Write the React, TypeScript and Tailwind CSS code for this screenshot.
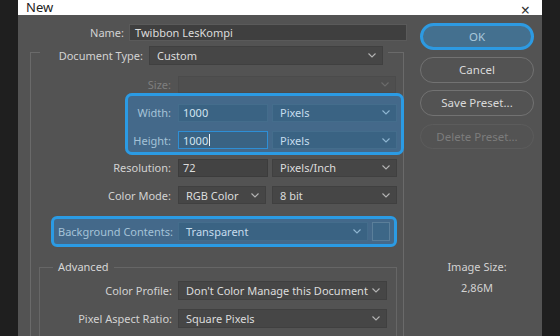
const Chevron = ({ color = "#b4b4b4" }: { color?: string }) => (
  <svg width="8" height="5" viewBox="0 0 8 5" className="shrink-0">
    <polyline points="0.5,0.5 4,4 7.5,0.5" fill="none" stroke={color} strokeWidth="1.1" />
  </svg>
);

interface SelectProps {
  value?: string;
  w: string;
  h?: string;
  tone?: "normal" | "blue" | "disabled";
}

const Select = ({ value = "", w, h = "h-[18px]", tone = "normal" }: SelectProps) => {
  const box =
    tone === "blue"
      ? "bg-[#3a6383] border-[#446d8c] text-[#c6dced]"
      : tone === "disabled"
      ? "bg-[#4f4f4f] border-[#4b4b4b] text-[#888]"
      : "bg-[#464646] border-[#404040] text-[#dcdcdc]";
  return (
    <div className={`${w} ${h} ${box} border flex items-center justify-between pl-[7px] pr-[6px] shrink-0`}>
      <span className="whitespace-nowrap leading-none">{value}</span>
      <Chevron color={tone === "blue" ? "#8fb6d2" : tone === "disabled" ? "#6c6c6c" : "#b4b4b4"} />
    </div>
  );
};

const Input = ({ value, w, blue = false, focused = false }: { value: string; w: string; blue?: boolean; focused?: boolean }) => (
  <div
    className={`${w} h-[18px] border flex items-center px-[4px] shrink-0 ${
      blue ? "bg-[#3a6383] text-[#d2e4f1]" : "bg-[#434343] text-[#dcdcdc]"
    } ${focused ? "border-[#2e8fd6]" : blue ? "border-[#446d8c]" : "border-[#3c3c3c]"}`}
  >
    <span className="leading-none">{value}</span>
    {focused && <span className="w-px h-[12px] bg-[#e8f2fa] ml-[1px]" />}
  </div>
);

const Label = ({ text, w, dim = false, blue = false }: { text: string; w: string; dim?: boolean; blue?: boolean }) => (
  <div
    className={`${w} text-right shrink-0 whitespace-nowrap leading-none ${
      dim ? "text-[#7f7f7f]" : blue ? "text-[#a5c3d8]" : "text-[#d2d2d2]"
    }`}
  >
    {text}
  </div>
);

const Button = ({ text, kind = "normal", className = "" }: { text: string; kind?: "ok" | "normal" | "disabled"; className?: string }) => {
  const style =
    kind === "ok"
      ? "border-[3px] border-[#2d9ae2] bg-[#44708f] text-[#a9c7dc]"
      : kind === "disabled"
      ? "border border-[#5c5c5c] text-[#7c7c7c]"
      : "border border-[#727272] text-[#dadada]";
  return (
    <div className={`w-[114px] shrink-0 rounded-full flex items-center justify-center leading-none text-[11.5px] ${style} ${className}`}>
      {text}
    </div>
  );
};

export default function App() {
  return (
    <div
      className="w-[560px] h-[336px] flex bg-[#1f1f1f] overflow-hidden text-[11px]"
      style={{ fontFamily: '"Noto Sans", "Open Sans", sans-serif' }}
    >
      <div className="w-[18px] shrink-0" />
      <div className="w-[524px] h-[336px] shrink-0 flex flex-col bg-[#535353] overflow-hidden">
        {/* title bar */}
        <div className="h-[15px] shrink-0 bg-white flex justify-between items-end overflow-hidden">
          <span className="ml-[8px] mb-[1px] text-[13px] leading-[13px] text-[#222]">New</span>
          <span className="mr-[12px] -mb-[2px] text-[16px] leading-[13px] text-[#333]">×</span>
        </div>

        <div className="flex flex-1 min-h-0">
          {/* form */}
          <div className="w-[392px] shrink-0 pt-[9px]">
            <div className="flex items-center gap-[5px] h-[17px]">
              <Label text="Name:" w="w-[106px]" />
              <div className="w-[278px] h-[17px] bg-[#3f3f3f] border border-[#5a5a5a] flex items-center px-[5px] text-[#dcdcdc]">
                <span className="leading-none">Twibbon LesKompi</span>
              </div>
            </div>

            <div className="mt-[11px] ml-[12px] w-[374px] h-[290px] border-l border-t border-r border-[#6a6a6a]">
              <div className="-mt-[7px] ml-[9px] w-[348px] bg-[#535353] flex items-center gap-[6px] h-[19px]">
                <Label text="Document Type:" w="w-[103px]" />
                <Select value="Custom" w="w-[234px]" h="h-[19px]" />
              </div>

              <div className="mt-[11px] flex items-center gap-[7px] h-[17px]">
                <Label text="Size:" w="w-[140px]" dim />
                <Select w="w-[218px]" h="h-[17px]" tone="disabled" />
              </div>

              <div className="relative ml-[94px] w-[279px] h-[62px] pt-[11px] rounded-[7px] bg-[#44698a]">
                <div className="flex items-center gap-[7px] h-[17px]">
                  <Label text="Width:" w="w-[46px]" blue />
                  <div className="flex gap-[4px]">
                    <Input value="1000" w="w-[90px]" blue />
                    <Select value="Pixels" w="w-[125px]" tone="blue" />
                  </div>
                </div>
                <div className="mt-[10px] flex items-center gap-[7px] h-[18px]">
                  <Label text="Height:" w="w-[46px]" blue />
                  <div className="flex gap-[4px]">
                    <Input value="1000" w="w-[90px]" blue focused />
                    <Select value="Pixels" w="w-[125px]" tone="blue" />
                  </div>
                </div>
                <div className="absolute inset-0 rounded-[7px] border-[3px] border-[#2b9be4] pointer-events-none" />
              </div>

              <div className="mt-[4px] flex items-center gap-[7px] h-[17px]">
                <Label text="Resolution:" w="w-[140px]" />
                <div className="flex gap-[4px]">
                  <Input value="72" w="w-[90px]" />
                  <Select value="Pixels/Inch" w="w-[125px]" />
                </div>
              </div>

              <div className="mt-[10px] flex items-center gap-[7px] h-[18px]">
                <Label text="Color Mode:" w="w-[140px]" />
                <div className="flex gap-[6px]">
                  <Select value="RGB Color" w="w-[88px]" />
                  <Select value="8 bit" w="w-[125px]" />
                </div>
              </div>

              <div className="mt-[12px] ml-[20px] w-[346px] h-[31px] rounded-[6px] border-[3px] border-[#2b9be4] bg-[#44698a] flex items-center gap-[5px]">
                <Label text="Background Contents:" w="w-[119px]" blue />
                <Select value="Transparent" w="w-[190px]" h="h-[19px]" tone="blue" />
                <div className="ml-[-1px] w-[18px] h-[19px] border border-[#5b7f9a] bg-[#3d6787]" />
              </div>

              <div className="mt-[20px] ml-[8px] w-[358px] h-[80px] border-l border-t border-r border-[#666]">
                <div className="-mt-[8px] ml-[13px] w-fit px-[5px] bg-[#535353] text-[#d6d6d6] leading-[14px]">
                  Advanced
                </div>
                <div className="mt-[7px] flex items-center gap-[6px] h-[19px]">
                  <Label text="Color Profile:" w="w-[132px]" />
                  <Select value="Don't Color Manage this Document" w="w-[209px]" h="h-[19px]" />
                </div>
                <div className="mt-[9px] flex items-center gap-[6px] h-[19px]">
                  <Label text="Pixel Aspect Ratio:" w="w-[132px]" />
                  <Select value="Square Pixels" w="w-[209px]" h="h-[19px]" />
                </div>
              </div>
            </div>
          </div>

          {/* buttons */}
          <div className="flex-1 pl-[10px] pt-[8px] flex flex-col">
            <Button text="OK" kind="ok" className="h-[27px]" />
            <Button text="Cancel" className="h-[26px] mt-[7px]" />
            <Button text="Save Preset..." className="h-[26px] mt-[7px]" />
            <Button text="Delete Preset..." kind="disabled" className="h-[25px] mt-[8px]" />
            <div className="w-[114px] mt-[112px] text-center text-[#d2d2d2] leading-none">Image Size:</div>
            <div className="w-[114px] mt-[10px] text-center text-[#d2d2d2] leading-none">2,86M</div>
          </div>
        </div>
      </div>
    </div>
  );
}
